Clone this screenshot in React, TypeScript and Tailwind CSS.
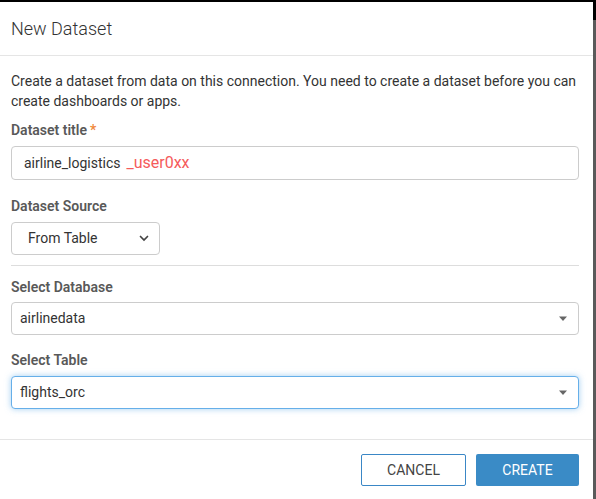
import React from "react";

const Caret = () => (
  <svg width="10" height="6" viewBox="0 0 10 6" className="text-[#666]">
    <path d="M1 0.5h8L5 5z" fill="currentColor" />
  </svg>
);

const Chevron = () => (
  <svg width="10" height="7" viewBox="0 0 10 7" className="text-[#444]">
    <path d="M1.5 1.5L5 5l3.5-3.5" fill="none" stroke="currentColor" strokeWidth="1.7" strokeLinecap="round" />
  </svg>
);

const Label = ({ children, required }: { children: React.ReactNode; required?: boolean }) => (
  <div className="text-[14px] leading-[20px] font-semibold text-[#595959]">
    {children}
    {required && <span className="text-[#f0883a] ml-[3px]">*</span>}
  </div>
);

const FakeSelect = ({ value, focused }: { value: string; focused?: boolean }) => (
  <div
    className={
      focused
        ? "mt-[6px] h-[33px] flex items-center justify-between pl-[8px] pr-[10px] rounded-[4px] border border-[#66afe9] shadow-[0_0_6px_rgba(102,175,233,0.6)] bg-white"
        : "mt-[5px] h-[33px] flex items-center justify-between pl-[8px] pr-[10px] rounded-[4px] border border-[#ccc] bg-white"
    }
  >
    <span className="text-[14px] text-[#333]">{value}</span>
    <Caret />
  </div>
);

export default function App() {
  return (
    <div className="flex w-[596px] h-[499px] bg-white" style={{ fontFamily: "Roboto, 'Liberation Sans', sans-serif" }}>
      <div className="flex-1 flex flex-col">
        <div className="h-[2px] bg-black" />
        <div className="h-[54px] flex items-center px-[11px] border-b border-[#e5e5e5]">
          <h1 className="text-[18px] font-light text-[#333]">New Dataset</h1>
        </div>

        <div className="px-[11px] pt-[15px] pr-[14px]">
          <p className="text-[14px] leading-[20px] text-[#333]">
            Create a dataset from data on this connection. You need to create a dataset before you can create
            dashboards or apps.
          </p>

          <div className="mt-[9px]">
            <Label required>Dataset title</Label>
            <div className="mt-[6px] h-[34px] flex items-center px-[12px] rounded-[4px] border border-[#ccc]">
              <span className="text-[14px] text-[#333]">airline_logistics</span>
              <span className="text-[16px] text-[#f55b5b] ml-[6px]">_user0xx</span>
            </div>
          </div>

          <div className="mt-[16px]">
            <Label>Dataset Source</Label>
            <div className="mt-[6px] w-[149px] h-[33px] flex items-center justify-between pl-[16px] pr-[10px] rounded-[4px] border border-[#ccc]">
              <span className="text-[14px] text-[#333]">From Table</span>
              <Chevron />
            </div>
          </div>

          <div className="mt-[10px] border-t border-[#ddd]" />

          <div className="mt-[11px]">
            <Label>Select Database</Label>
            <FakeSelect value="airlinedata" />
          </div>

          <div className="mt-[15px]">
            <Label>Select Table</Label>
            <FakeSelect value="flights_orc" focused />
          </div>
        </div>

        <div className="mt-[30px] border-t border-[#e5e5e5] flex justify-end gap-[10px] pt-[14px] pr-[14px]">
          <button className="w-[105px] h-[32px] rounded-[2px] border border-[#3a87c6] bg-white text-[14px] text-[#444]">
            CANCEL
          </button>
          <button className="w-[103px] h-[32px] rounded-[2px] bg-[#3a8bc6] text-[14px] text-white">
            CREATE
          </button>
        </div>
      </div>
      <div className="w-[3px] flex flex-col">
        <div className="h-[20px] bg-black" />
        <div className="flex-1 bg-[#5a5a5a]" />
      </div>
    </div>
  );
}
